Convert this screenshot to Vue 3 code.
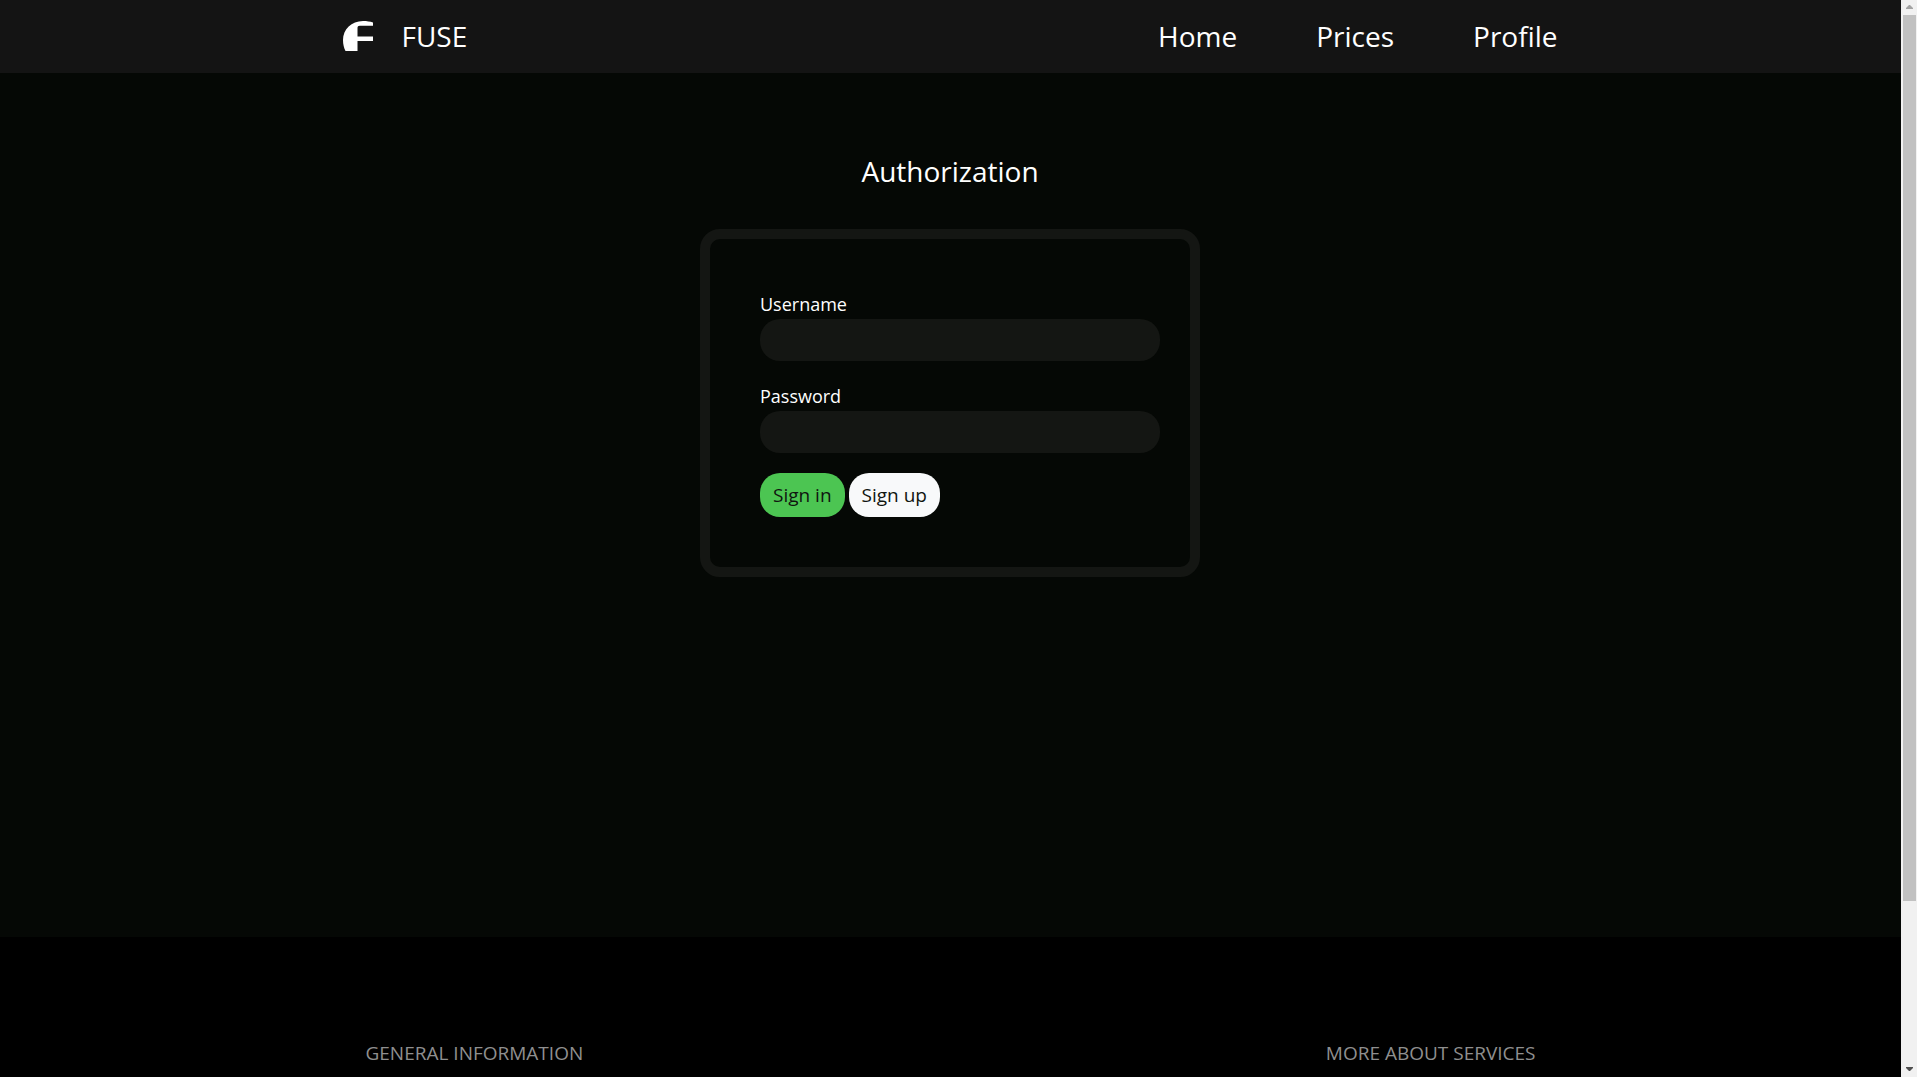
<script setup>
import { ref } from 'vue'

const links = ['Home', 'Prices', 'Profile']
const username = ref('')
const password = ref('')
</script>

<template>
  <div class="shell">
    <div class="page">
      <header class="header">
        <div class="header-inner">
          <a class="brand" href="#">
            <svg class="logo" viewBox="0 0 30 30" aria-hidden="true">
              <path fill="#fff" d="M30 1.500C27 .500 24 0 20 0 8.500 0 0 8.500 0 19c0 4.500 1 8 2.500 11H14.500V20H30V15.500H14.500V7c0-1.500.8-2.300 2.300-2.300H30z" />
            </svg>
            <span>FUSE</span>
          </a>
          <nav class="nav">
            <a v-for="link in links" :key="link" href="#">{{ link }}</a>
          </nav>
        </div>
      </header>

      <main class="main">
        <h1 class="title">Authorization</h1>
        <form class="card" @submit.prevent>
          <div class="field">
            <label for="username">Username</label>
            <input id="username" v-model="username" type="text" />
          </div>
          <div class="field">
            <label for="password">Password</label>
            <input id="password" v-model="password" type="password" />
          </div>
          <div class="actions">
            <button class="btn btn-green" type="submit">Sign in</button>
            <button class="btn btn-light" type="button">Sign up</button>
          </div>
        </form>
      </main>

      <footer class="footer">
        <div class="footer-inner">
          <h2>GENERAL INFORMATION</h2>
          <h2>MORE ABOUT SERVICES</h2>
        </div>
      </footer>
    </div>

    <div class="scrollbar" aria-hidden="true">
      <svg class="arrow" viewBox="0 0 16 15"><path fill="#a3a3a3" d="M8 5h1l3 3v1H5V8z" /></svg>
      <div class="track"><div class="thumb"></div></div>
      <svg class="arrow" viewBox="0 0 16 15"><path fill="#505050" d="M5 5h7v1L9 9H8L5 6z" /></svg>
    </div>
  </div>
</template>

<style>
body {
  margin: 0;
  background: #000;
}
</style>

<style scoped>
.shell,
.shell * {
  box-sizing: border-box;
}
.shell {
  display: flex;
  height: 100vh;
  font-family: "Open Sans", "Noto Sans", sans-serif;
  font-size: 18px;
  line-height: 30px;
  color: #fff;
}
.page {
  flex: 1;
  min-width: 0;
  overflow: hidden;
  background: #000;
}
.header {
  background: #141414;
}
.header-inner {
  display: flex;
  align-items: center;
  justify-content: space-between;
  max-width: 1320px;
  margin: 0 auto;
  padding: 21px 53px 22px 52px;
  font-size: 28px;
}
.header a {
  color: #fff;
  text-decoration: none;
}
.brand {
  display: flex;
  align-items: center;
  gap: 29px;
}
.logo {
  width: 30px;
  height: 30px;
}
.nav {
  display: flex;
  gap: 79px;
}
.main {
  display: flex;
  flex-direction: column;
  align-items: center;
  padding: 76px 1px 360px 0;
  background: #050805;
}
.title {
  margin: 0 0 35px;
  font-size: 28px;
  font-weight: 400;
  line-height: 45px;
}
.card {
  display: flex;
  flex-direction: column;
  gap: 20px;
  width: 500px;
  max-width: 100%;
  padding: 50px 30px 50px 50px;
  border: 10px solid #141613;
  border-radius: 20px;
}
.field {
  display: flex;
  flex-direction: column;
}
.field input {
  width: 100%;
  height: 42px;
  padding: 0 16px;
  border: 0;
  border-radius: 20px;
  background: #141613;
  color: #fff;
  font: inherit;
}
.actions {
  display: flex;
  gap: 4px;
}
.btn {
  height: 44px;
  padding: 0 13px;
  border: 0;
  border-radius: 20px;
  color: #101510;
  font: inherit;
  font-size: 19px;
}
.btn-green {
  background: #4cc552;
}
.btn-light {
  background: #f8f9fa;
}
.footer {
  padding: 101px 0 30px;
  background: #000;
}
.footer-inner {
  display: flex;
  justify-content: space-between;
  max-width: 1170px;
  margin: 0 auto;
}
.footer h2 {
  margin: 0;
  font-size: 19px;
  font-weight: 400;
  color: #8f8f8f;
}
.scrollbar {
  display: flex;
  flex-direction: column;
  flex: none;
  width: 16px;
  padding: 0 1px 0 2px;
  background: #f1f1f1;
}
.arrow {
  flex: none;
  width: 16px;
  height: 15px;
  margin-left: -2px;
}
.track {
  flex: 1;
}
.thumb {
  height: 84.6%;
  background: #c1c1c1;
}
</style>
